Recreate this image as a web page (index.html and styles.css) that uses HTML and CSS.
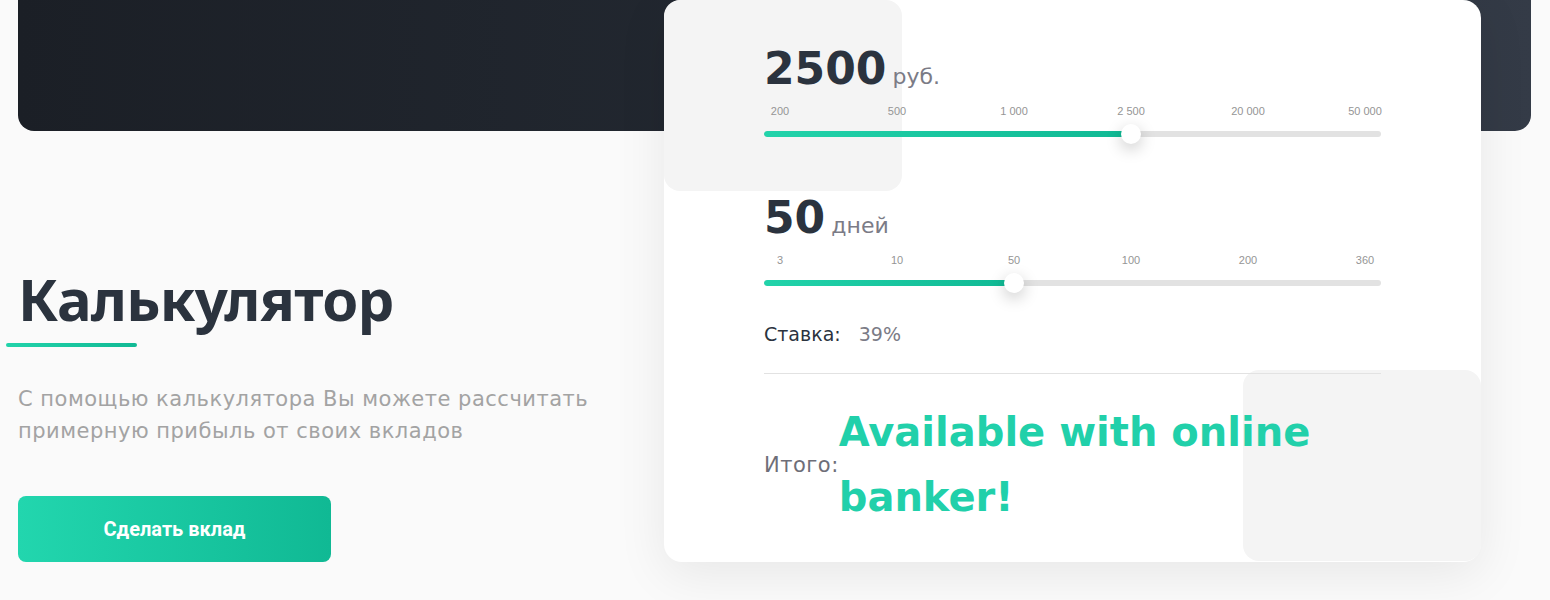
FILE: index.html
```html
<!DOCTYPE html>
<html lang="ru">
<head>
  <meta charset="UTF-8">
  <meta name="viewport" content="width=device-width, initial-scale=1.0">
  <title>Калькулятор</title>
  <link rel="stylesheet" href="styles.css">
</head>
<body>
  <div class="banner"></div>

  <section class="calc-section">
    <div class="intro">
      <h2>Калькулятор</h2>
      <div class="underline"></div>
      <p>С помощью калькулятора Вы можете рассчитать примерную прибыль от своих вкладов</p>
      <button class="deposit-btn">Сделать вклад</button>
    </div>

    <div class="card">
      <div class="card-body">
        <div class="field">
          <div class="field-value"><strong>2500</strong> <span>руб.</span></div>
          <div class="scale">
            <span>200</span><span>500</span><span>1 000</span><span>2 500</span><span>20 000</span><span>50 000</span>
          </div>
          <div class="slider">
            <div class="track">
              <div class="fill" style="width: 59.5%"></div>
            </div>
            <div class="thumb" style="left: 59.5%"></div>
          </div>
        </div>

        <div class="field field-days">
          <div class="field-value"><strong>50</strong> <span>дней</span></div>
          <div class="scale">
            <span>3</span><span>10</span><span>50</span><span>100</span><span>200</span><span>360</span>
          </div>
          <div class="slider">
            <div class="track">
              <div class="fill" style="width: 40.5%"></div>
            </div>
            <div class="thumb" style="left: 40.5%"></div>
          </div>
        </div>

        <div class="rate">Ставка: <span>39%</span></div>

        <div class="total">
          <div class="total-label">Итого:</div>
          <div class="total-value">Available with online banker!</div>
        </div>
      </div>
    </div>
  </section>
</body>
</html>
```

FILE: styles.css
```css
/* Reset */
* {
  margin: 0;
  padding: 0;
  box-sizing: border-box;
}

body {
  font-family: 'DejaVu Sans', sans-serif;
  background-color: #fafafa;
  color: #2b333e;
  min-height: 600px;
}

/* Dark banner */
.banner {
  margin: 0 19px 0 18px;
  height: 131px;
  border-radius: 0 0 16px 16px;
  background: linear-gradient(90deg, #1b1f26, #242a33 60%, #343b47);
}

/* Section */
.calc-section {
  display: grid;
  grid-template-columns: 646px 817px;
  align-items: end;
  margin-top: -131px;
  padding-left: 18px;
}

/* Left column */
.intro h2 {
  font-family: 'Noto Sans', sans-serif;
  font-size: 58px;
  font-weight: 700;
  line-height: 72px;
  color: #2b333e;
  letter-spacing: -0.7px;
}

.underline {
  width: 131px;
  height: 4px;
  margin: 8px 0 0 -12px;
  border-radius: 2px;
  background: linear-gradient(90deg, #22d3aa, #10b994);
}

.intro p {
  margin-top: 36px;
  max-width: 610px;
  font-size: 21px;
  line-height: 32px;
  letter-spacing: 0.5px;
  color: #a3a3a3;
}

.deposit-btn {
  margin-top: 49px;
  width: 313px;
  height: 66px;
  border: none;
  border-radius: 8px;
  background: linear-gradient(90deg, #22d6ae, #10b994);
  color: #ffffff;
  font-family: 'Roboto', sans-serif;
  font-size: 20px;
  font-weight: 700;
  cursor: pointer;
}

/* Card */
.card {
  position: relative;
  height: 562px;
  background-color: #ffffff;
  border-radius: 18px;
  box-shadow: 0 12px 50px rgba(0, 0, 0, 0.08);
}

.card::before,
.card::after {
  content: '';
  position: absolute;
  width: 238px;
  height: 191px;
  background-color: #f4f4f4;
  border-radius: 16px;
}

.card::before {
  top: 0;
  left: 0;
}

.card::after {
  right: 0;
  bottom: 1px;
}

.card-body {
  position: relative;
  z-index: 1;
  padding: 40px 100px 0;
}

.field-days {
  margin-top: 45px;
}

.field-value {
  height: 58px;
  line-height: 58px;
  white-space: nowrap;
}

.field-value strong {
  font-size: 44px;
  font-weight: 700;
  color: #2b333e;
}

.field-value span {
  margin-left: 1px;
  font-size: 22px;
  color: #7b7b86;
}

.scale {
  display: flex;
  justify-content: space-between;
  margin-top: 6px;
  height: 14px;
}

.scale span {
  width: 32px;
  display: flex;
  justify-content: center;
  white-space: nowrap;
  font-family: 'Liberation Sans', Arial, sans-serif;
  font-size: 11px;
  line-height: 14px;
  color: #959595;
}

.slider {
  position: relative;
  height: 20px;
  margin-top: 6px;
}

.track {
  position: absolute;
  left: 0;
  right: 0;
  top: 7px;
  height: 6px;
  border-radius: 3px;
  background-color: #e2e2e2;
  overflow: hidden;
}

.fill {
  height: 100%;
  border-radius: 3px;
  background: linear-gradient(90deg, #22d3aa, #10b994);
}

.thumb {
  position: absolute;
  top: 0;
  width: 20px;
  height: 20px;
  margin-left: -10px;
  border-radius: 50%;
  background-color: #ffffff;
  box-shadow: 0 5px 16px rgba(0, 0, 0, 0.22);
}

.rate {
  margin-top: 29px;
  font-size: 19px;
  line-height: 24px;
  color: #2b333e;
  padding-bottom: 27px;
  border-bottom: 1px solid #e2e2e2;
}

.rate span {
  margin-left: 12px;
  color: #7b7b86;
}

.total {
  display: flex;
  align-items: center;
  margin-top: 26px;
}

.total-label {
  flex-shrink: 0;
  font-size: 21px;
  letter-spacing: 0.5px;
  color: #6e6e78;
}

.total-value {
  font-size: 40px;
  font-weight: 700;
  line-height: 65px;
  color: #21d0aa;
}
```
